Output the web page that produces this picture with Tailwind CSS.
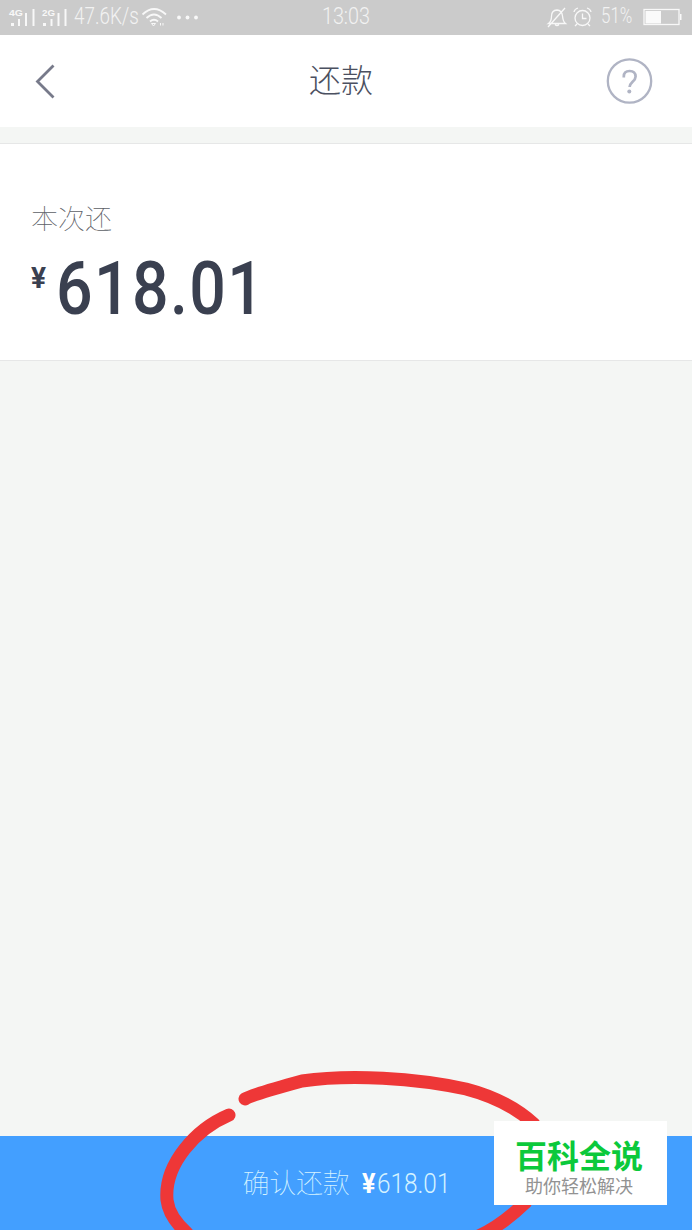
<!DOCTYPE html>
<html lang="zh-CN">
<head>
<meta charset="UTF-8">
<meta name="viewport" content="width=device-width, initial-scale=1.0">
<title>还款</title>
<script src="https://cdn.jsdelivr.net/npm/@tailwindcss/browser@4"></script>
<style>
  body {
    font-family: Roboto, 'Noto Sans CJK SC', sans-serif;
  }
</style>
</head>
<body class="bg-[#f4f6f4]">
<div class="relative flex flex-col w-[692px] h-[1230px] overflow-hidden">
  <!-- 状态栏 -->
  <div class="flex items-center justify-between h-[35px] shrink-0 bg-[#cbcbcb] text-[#f2f2f2] font-light">
    <div class="flex items-center w-[260px] h-full">
      <svg class="w-[72px] h-[35px] shrink-0" viewBox="0 0 72 35" fill="#f8f8f8">
        <text x="9" y="15.5" font-size="9" font-weight="700" font-family="Liberation Sans, sans-serif" textLength="14" lengthAdjust="spacingAndGlyphs">4G</text>
        <path d="M11 23h3v3h-3zM18 19h2v7h-2zM25 13h2v13h-2zM32.500 9h2v17h-2z"/>
        <text x="42" y="15.500" font-size="9" font-weight="700" font-family="Liberation Sans, sans-serif" textLength="13" lengthAdjust="spacingAndGlyphs">2G</text>
        <path d="M43 23h3v3h-3zM50.500 19h2v7h-2zM57.500 13h2v13h-2zM64.500 9h2v17h-2z"/>
      </svg>
      <div class="w-[68px] pl-[2px] text-[23px] leading-[33px] h-[35px]"><span class="inline-block origin-left scale-x-[0.82] whitespace-nowrap">47.6K/s</span></div>
      <svg class="w-[60px] h-[35px] shrink-0" viewBox="140 0 60 35" fill="none" stroke="#f8f8f8" stroke-width="1.800">
        <path d="M142.500 14.500q11.500-11 23.500 0M146.500 18q7.500-7 15 0M150 21.500q4-3.500 8 0"/>
        <path d="M151.500 23.500h4l-2 2.500zM160.500 23v2.500M163 23v2.500" stroke-width="1"/>
        <g fill="#f8f8f8" stroke="none"><circle cx="179" cy="17.500" r="1.900"/><circle cx="187.500" cy="17.500" r="1.900"/><circle cx="196" cy="17.500" r="1.900"/></g>
      </svg>
    </div>
    <div class="w-[170px] text-center text-[23px] leading-[33px] h-[35px]"><span class="inline-block scale-x-[0.86]">13:03</span></div>
    <div class="flex items-center justify-end w-[260px] h-full">
      <svg class="w-[52px] h-[35px] shrink-0" viewBox="543 0 52 35" fill="none" stroke="#f8f8f8" stroke-width="1.300">
        <path d="M548.500 23.500q3-2 3-7.500t5.500-6q5 .5 5.500 6t3 7.500zM555 24.500q2 2 4 0M565 8L548 27"/>
        <circle cx="582.500" cy="18" r="7.500"/>
        <path d="M582.500 13.500v5h4M574 12q.5-3 4-4M591 12q-.5-3-4-4M577 24l-2 2M588 24l2 2"/>
      </svg>
      <div class="w-[48px] pl-[6px] text-[22px] leading-[32px] h-[35px]"><span class="inline-block origin-left scale-x-[0.77] whitespace-nowrap">51%</span></div>
      <svg class="w-[49px] h-[35px] shrink-0" viewBox="643 0 49 35" fill="none" stroke="#f8f8f8">
        <rect x="644" y="9.500" width="35" height="15" stroke-width="1.300"/>
        <path d="M645.500 11h15.500v12.500h-15.500zM680 14h1.500v6h-1.500z" fill="#fafafa" stroke="none"/>
      </svg>
    </div>
  </div>

  <!-- 标题栏 -->
  <header class="flex items-center justify-between h-[92px] shrink-0 pl-[33px] pr-[39px] bg-white">
    <svg class="w-[48px] h-[48px]" viewBox="33 57 48 48" fill="none" stroke="#777a8a" stroke-width="2.800">
      <path d="M53.500 65.500L37.500 81.500L53.500 97.500"/>
    </svg>
    <h1 class="pb-[1px] pr-[4px] text-[32px] leading-[40px] font-light text-[#4b5060]">还款</h1>
    <svg class="w-[48px] h-[48px]" viewBox="605 57 48 48" fill="none" stroke="#b0b4c4">
      <circle cx="629.500" cy="81" r="21.700" stroke-width="2.300"/>
      <path d="M623.800 77.500V76.500q0-5.500 5.800-5.500t6 5.500q0 2.500-3 5.300t-3 5.200" stroke-width="2.700"/>
      <circle cx="629.300" cy="91.500" r="2" fill="#b0b4c4" stroke="none"/>
    </svg>
  </header>

  <!-- 还款金额 -->
  <section class="mt-4 h-[218px] shrink-0 pt-[56px] pl-[31px] bg-white border-y border-[#e6e7e7]">
    <p class="text-[27px] leading-[40px] font-thin text-[#5c6066]">本次还</p>
    <div class="flex items-start text-[#3a4050]">
      <span class="w-[25px] pt-[22px] text-[29px] leading-[32px] font-bold"><span class="inline-block origin-left scale-x-[0.97]">¥</span></span>
      <span class="inline-block origin-left scale-x-[0.87] pt-[1px] text-[74px] leading-[96px] font-medium tracking-[1.600px]">618.01</span>
    </div>
  </section>

  <!-- 确认按钮 -->
  <button class="mt-auto flex items-center justify-center h-[94px] shrink-0 bg-[#439fff] text-[#d5f3ff]">
    <span class="pt-[2px] pl-[1px] text-[27px] leading-[40px] tracking-[-0.200px] font-thin">确认还款</span>
    <span class="flex items-center w-[89px] ml-[12px] pt-[1px] text-[28px] leading-[40px]">
      <span class="w-[15px] font-bold text-white"><span class="inline-block origin-left scale-x-[0.9]">¥</span></span>
      <span class="inline-block origin-left scale-x-[0.87] font-light">618.01</span>
    </span>
  </button>

  <!-- 红色圈注 -->
  <svg class="absolute left-0 top-[1050px] w-[692px] h-[180px]" viewBox="0 1050 692 180" fill="none" stroke="#ee3737" stroke-width="13" stroke-linecap="round" stroke-linejoin="round">
    <path d="M245 1099Q251 1095 302 1081C350 1074 415 1078 466 1089Q508 1100 534 1124"/>
    <path d="M229 1115C196 1129 164 1164 167 1200Q169 1217 187 1233"/>
    <path d="M474 1238Q499 1228 526 1202"/>
  </svg>

  <!-- 水印 -->
  <div class="absolute left-[494px] top-[1121px] flex flex-col items-center w-[173px] h-[84px] pt-[17px] pr-[3px] bg-white">
    <p class="text-[32px] leading-[38px] font-bold text-[#0bc93b]">百科全说</p>
    <p class="-mt-[1px] text-[18px] leading-[24px] text-[#929292]">助你轻松解决</p>
  </div>
</div>
</body>
</html>
